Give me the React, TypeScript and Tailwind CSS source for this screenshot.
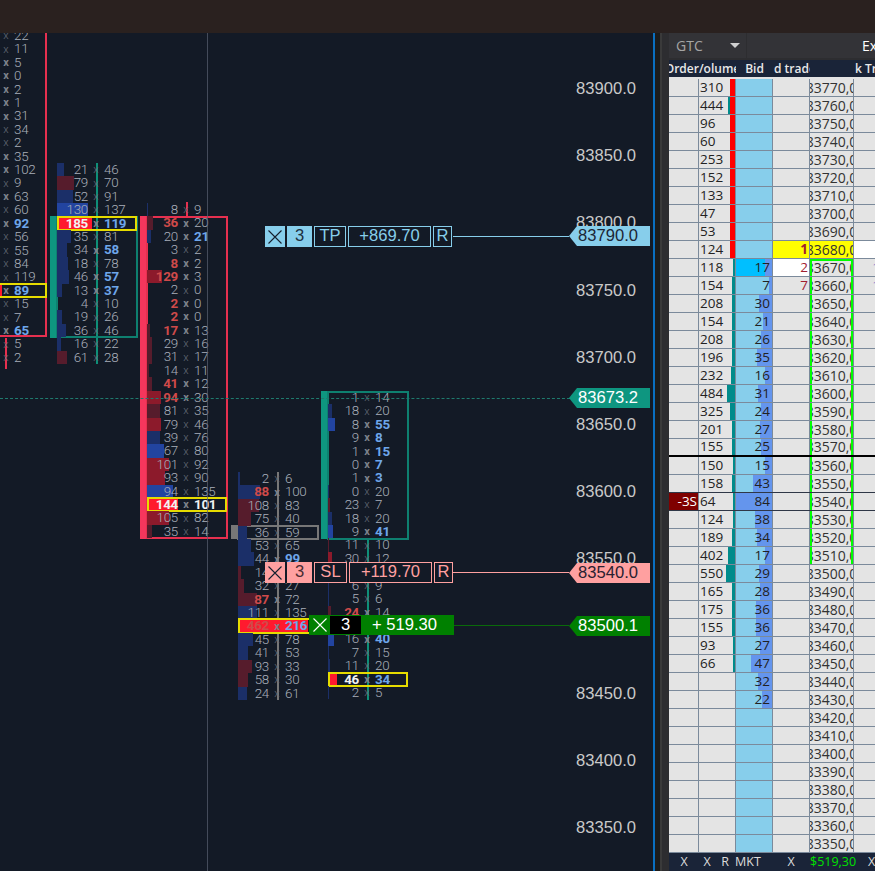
import React from "react";

type Row = [number | string, number | string, number?, string?, string?];

// bar colours for the footprint volume
const barColors: Record<string, string> = {
  n: "bg-[#1b2f68]",
  b: "bg-[#2244a0]",
  d: "bg-[#561c2c]",
  r: "bg-[#8c1a2b]",
  R: "bg-[#ff1a2e]",
};

const col1: Row[] = [
  [0, 22], [0, 11], [0, 5, 0, "", "x"], [0, 0, 0, "", "x"], [0, 2, 0, "", "x"], [0, 1, 0, "", "x"], [0, 31, 0, "", "x"], [0, 34], [0, 2],
  [0, 35, 0, "", "x"], [0, 102, 0, "", "x"], [0, 9], [0, 63, 0, "", "x"], [0, 60], [0, 92, 0, "", "b"], [0, 56], [0, 55], [0, 84], [0, 119],
  [0, 89, 35, "R", "bh"], [0, 15], [0, 7], [0, 65, 0, "", "b"], [0, 5], [0, 2],
];

const col2: Row[] = [
  [21, 46, 7, "n"], [79, 70, 17, "d"], [52, 91, 16, "n"], [130, 137, 31, "b"], [185, 119, 35, "R", "Wbh"], [35, 81, 14, "n"], [34, 58, 10, "n", "b"],
  [18, 78, 11, "n"], [46, 57, 12, "n", "b"], [13, 37, 5, "n", "b"], [4, 10], [19, 26, 5, "n"], [36, 46, 9, "n"], [16, 22, 4, "n"], [61, 28, 10, "d"],
];

const col3: Row[] = [
  [8, 9, 1, "n"], [36, 20, 6, "d", "r"], [20, 21, 4, "n", "b"], [3, 2], [8, 2, 0, "", "r"], [129, 3, 15, "r", "r"], [2, 0], [2, 0, 0, "", "r"], [2, 0, 0, "", "r"],
  [17, 13, 3, "d", "r"], [29, 16, 5, "d"], [31, 17, 5, "d"], [14, 11, 2, "d"], [41, 12, 5, "d", "r"], [94, 30, 14, "r", "r"], [81, 35, 13, "d"], [79, 46, 14, "r"],
  [39, 76, 13, "n"], [67, 80, 17, "b"], [101, 92, 22, "r"], [93, 90, 18, "r"], [94, 135, 26, "b"], [144, 101, 31, "R", "Wah"], [105, 82, 22, "r"], [35, 14, 5, "d"],
];

const col4: Row[] = [
  [2, 6, 2, "n"], [88, 100, 22, "n", "r"], [108, 83, 21, "d"], [75, 40, 13, "d"], [36, 59, 9, "n"], [53, 65, 13, "n"], [44, 99, 16, "n", "b"], [14, 33, 3, "d"],
  [32, 27, 6, "d"], [87, 72, 19, "d", "r"], [111, 135, 19, "n"], [462, 216, 70, "R", "rbh"], [45, 78, 15, "n"], [41, 53, 10, "n"], [93, 33, 14, "d"], [58, 30, 10, "d"], [24, 61, 9, "n"],
];

const col5: Row[] = [
  [1, 14], [18, 20, 4, "n"], [8, 55, 7, "b", "b"], [9, 8, 0, "", "b"], [1, 15, 0, "", "b"], [0, 7, 0, "", "b"], [1, 3, 0, "", "b"], [0, 20, 1, "n"], [23, 7, 2, "d"],
  [18, 20, 4, "n"], [9, 41, 5, "b", "b"], [11, 10, 1, "d"], [30, 12, 4, "r"], [1, 5, 1, "n"], [6, 9, 1, "n"], [5, 6, 1, "n"], [24, 14, 3, "d", "r"], [3, 18, 2, "b"],
  [16, 40, 6, "b", "b"], [7, 15, 1, "n"], [11, 20, 2, "n"], [46, 34, 9, "R", "Wbh"], [2, 5, 1, "n"],
];

function Cluster({ rows, className }: { rows: Row[]; className: string }) {
  return (
    <div className={`absolute w-[80px] ${className}`}>
      {rows.map(([bid, ask, bar = 0, color = "", flags = ""], i) => {
        const boldX = /[rWbx]/.test(flags);
        return (
          <div key={i} className="relative grid h-[13.42px] grid-cols-[31px_16px_1fr] items-center leading-none">
            {bar > 0 && <div className={`absolute inset-y-0 left-0 ${barColors[color]}`} style={{ width: bar }} />}
            {flags.includes("h") && <div className="absolute inset-x-0 -top-px -bottom-px border-2 border-[#e6dc00]" />}
            <span
              className={`relative text-right ${
                flags.includes("r") ? "font-bold text-[#cf4a4a]" : flags.includes("W") ? "font-bold text-[#f2f2f2]" : "text-[#a9afba]"
              }`}
            >
              {bid}
            </span>
            <span className={`relative text-center text-[11px] tracking-normal ${boldX ? "font-bold text-[#7d828b]" : "text-[#666d79]"}`}>x</span>
            <span
              className={`relative ${
                flags.includes("b") ? "font-bold text-[#6ea6ea]" : flags.includes("a") ? "font-bold text-[#f2f2f2]" : "text-[#a9afba]"
              }`}
            >
              {ask}
            </span>
          </div>
        );
      })}
    </div>
  );
}

function XMark() {
  return (
    <svg viewBox="0 0 14 14" className="h-[14px] w-[14px]" fill="none" stroke="currentColor" strokeWidth="1.1">
      <path d="M0.5 0.5 13.5 13.5M13.5 0.5 0.5 13.5" />
    </svg>
  );
}

function PriceTag({ text, className }: { text: string; className: string }) {
  return (
    <div
      className={`absolute left-[569px] flex h-[20px] w-[81px] items-center pl-[9px] font-['Liberation_Sans',sans-serif] text-[16.6px] leading-none [clip-path:polygon(8px_0,100%_0,100%_100%,8px_100%,0_50%)] ${className}`}
    >
      {text}
    </div>
  );
}

const axis: [string, string][] = [
  ["83900.0", "top-[46px]"],
  ["83850.0", "top-[113px]"],
  ["83800.0", "top-[180px]"],
  ["83750.0", "top-[248px]"],
  ["83700.0", "top-[315px]"],
  ["83650.0", "top-[382px]"],
  ["83600.0", "top-[449px]"],
  ["83550.0", "top-[516px]"],
  ["83450.0", "top-[651px]"],
  ["83400.0", "top-[718px]"],
  ["83350.0", "top-[785px]"],
];

function Chart() {
  return (
    <div className="relative h-full w-[653px] overflow-hidden bg-[#131a26] font-['Roboto',sans-serif] text-[13.4px] font-light tracking-[-0.3px]">
      {/* candle wicks */}
      <div className="absolute left-[5px] top-[305px] h-[31px] w-[2px] bg-[#e6304f]" />
      <div className="absolute left-[96px] top-[130px] h-[201px] w-[2px] bg-[#0e8f78]" />
      <div className="absolute left-[186px] top-[169px] h-[15px] w-[2px] bg-[#e6304f]" />
      <div className="absolute left-[277px] top-[439px] h-[228px] w-[2px] bg-[#777777]" />
      <div className="absolute left-[367px] top-[506px] h-[161px] w-[2px] bg-[#0e8f78]" />

      {/* candle bodies */}
      <div className="absolute -left-[3px] -top-[3px] h-[307px] w-[50px] border-2 border-[#e6304f]" />
      <div className="absolute left-[50px] top-[183px] h-[122px] w-[7px] bg-[#0e9680]" />
      <div className="absolute left-[56px] top-[183px] h-[122px] w-[82px] border-2 border-[#0e8070]" />
      <div className="absolute left-[140px] top-[183px] h-[323px] w-[7px] bg-[#f5365c]" />
      <div className="absolute left-[146px] top-[183px] h-[323px] w-[82px] border-2 border-[#e6304f]" />
      <div className="absolute left-[231px] top-[492px] h-[14px] w-[7px] bg-[#777777]" />
      <div className="absolute left-[237px] top-[492px] h-[15px] w-[82px] border-2 border-[#777777]" />
      <div className="absolute left-[321px] top-[358px] h-[148px] w-[7px] bg-[#0e9680]" />
      <div className="absolute left-[327px] top-[358px] h-[149px] w-[82px] border-2 border-[#0e8070]" />

      <Cluster rows={col1} className="-left-[33px] top-[-4px]" />
      <Cluster rows={col2} className="left-[57px] top-[130px]" />
      <Cluster rows={col3} className="left-[147px] top-[170px]" />
      <Cluster rows={col4} className="left-[238px] top-[439px]" />
      <Cluster rows={col5} className="left-[328px] top-[358px]" />

      {/* grid lines */}
      <div className="absolute inset-y-0 left-[207px] w-px bg-[#5a6170]/70" />
      <div className="absolute left-0 top-[365px] w-[570px] border-t border-dashed border-[#1f7a6e]" />

      {/* price axis */}
      {axis.map(([p, top]) => (
        <div key={p} className={`absolute left-[576px] font-['Liberation_Sans',sans-serif] text-[16.6px] font-normal leading-[20px] tracking-normal text-[#c9c9c9] ${top}`}>
          {p}
        </div>
      ))}

      {/* lines from the orders to the axis */}
      <div className="absolute left-[453px] top-[203px] h-px w-[116px] bg-[#87ceeb]" />
      <div className="absolute left-[453px] top-[539px] h-px w-[116px] bg-[#ffa0a0]" />
      <div className="absolute left-[454px] top-[592px] h-px w-[115px] bg-[#0a6a0a]" />

      <PriceTag text="83790.0" className="top-[193px] bg-[#87ceeb] font-normal tracking-normal text-[#1c2636]" />
      <PriceTag text="83673.2" className="top-[355px] bg-[#0e9680] font-normal tracking-normal text-white" />
      <PriceTag text="83540.0" className="top-[530px] bg-[#ffa0a0] font-normal tracking-normal text-[#2a2030]" />
      <PriceTag text="83500.1" className="top-[583px] bg-[#008000] font-normal tracking-normal text-white" />

      {/* take profit */}
      <div className="absolute left-[265px] top-[193px] flex h-[21px] font-['Liberation_Sans',sans-serif] text-[16.6px] font-normal leading-none tracking-normal text-[#87ceeb]">
        <div className="flex w-[20px] items-center justify-center bg-[#87ceeb] text-[#16202e]">
          <XMark />
        </div>
        <div className="ml-[2px] flex w-[25px] items-center justify-center bg-[#87ceeb] text-[#1c3040]">3</div>
        <div className="ml-[2px] flex w-[32px] items-center justify-center border border-[#87ceeb]">TP</div>
        <div className="ml-[2px] flex w-[83px] items-center justify-center border border-[#87ceeb]">+869.70</div>
        <div className="ml-[2px] flex w-[19px] items-center justify-center border border-[#87ceeb]">R</div>
      </div>

      {/* stop loss */}
      <div className="absolute left-[265px] top-[529px] flex h-[21px] bg-[#131a26] font-['Liberation_Sans',sans-serif] text-[16.6px] font-normal leading-none tracking-normal text-[#ffa0a0]">
        <div className="flex w-[20px] items-center justify-center bg-[#ffa0a0] text-[#16202e]">
          <XMark />
        </div>
        <div className="ml-[2px] flex w-[25px] items-center justify-center bg-[#ffa0a0] text-[#4a2a30]">3</div>
        <div className="ml-[2px] flex w-[33px] items-center justify-center border border-[#ffa0a0]">SL</div>
        <div className="ml-[2px] flex w-[83px] items-center justify-center border border-[#ffa0a0]">+119.70</div>
        <div className="ml-[2px] flex w-[19px] items-center justify-center border border-[#ffa0a0]">R</div>
      </div>

      {/* open position */}
      <div className="absolute left-[309px] top-[582px] flex h-[20px] w-[145px] bg-[#008000] font-['Liberation_Sans',sans-serif] text-[16.6px] font-normal leading-none tracking-normal text-white">
        <div className="flex w-[21px] items-center justify-center">
          <XMark />
        </div>
        <div className="my-px flex w-[31px] items-center justify-center bg-black">3</div>
        <div className="flex flex-1 items-center pl-[11px]">+ 519.30</div>
      </div>
    </div>
  );
}

const volumes = [
  310, 444, 96, 60, 253, 152, 133, 47, 53, 124, 118, 154, 208, 154, 208, 196, 232, 484, 325, 201, 155, 150, 158, 64, 124, 189, 402, 550, 165, 175, 155, 93, 66,
];
const bids = [17, 7, 30, 21, 26, 35, 16, 31, 24, 27, 25, 15, 43, 84, 38, 34, 17, 29, 28, 36, 36, 27, 47, 32, 22];
const prices = Array.from({ length: 43 }, (_, i) => 83770 - i * 10);

function LadderRow({ price, i }: { price: number; i: number }) {
  const vol = volumes[i];
  const bid = bids[i - 10];
  const inRange = price <= 83670 && price >= 83510;
  const border = i === 20 ? "border-b-2 border-black" : i === 22 || i === 23 ? "border-b border-[#2f3747]" : "border-b border-[#7b8a9b]";
  const height = i === 0 ? "h-[20px] pt-[2px]" : "h-[18px]";
  const cell = "relative flex items-center overflow-hidden border-r border-[#7b8a9b]";

  return (
    <div className={`grid grid-cols-[30px_37px_37px_37px_44px_21px] bg-[#e4e4e4] ${height} ${border}`}>
      <div className={`${cell} justify-end ${price === 83540 ? "bg-[#7f0000] pr-px text-white" : ""}`}>{price === 83540 ? "-3S" : ""}</div>
      <div className={cell}>
        {vol !== undefined && (
          <>
            <div className="absolute inset-y-0 right-0 bg-[#008b8b]" style={{ width: Math.max(2, vol / 60) }} />
            {i < 10 && <div className="absolute inset-y-0 right-0 w-[5px] bg-[#ff0000]" />}
            <span className="relative pl-px">{vol}</span>
          </>
        )}
      </div>
      <div className={`${cell} justify-end bg-[#87ceeb]`}>
        {price === 83670 && <div className="absolute inset-y-0 left-0 w-[30px] bg-[#00bfff]" />}
        {bid !== undefined && (
          <>
            <div className="absolute inset-y-0 right-0 bg-[#6495ed]" style={{ width: bid * 0.44 }} />
            <span className="relative pr-[2px]">{bid}</span>
          </>
        )}
      </div>
      <div
        className={`${cell} justify-end pr-px text-[#a02030] ${price === 83680 ? "bg-[#ffff00] font-bold text-[#8b0000]" : price === 83670 ? "bg-white" : ""}`}
      >
        {price === 83680 ? 1 : price === 83670 ? 2 : price === 83660 ? 7 : ""}
      </div>
      <div className={`${cell} justify-center text-[14px] text-[#333333] ${price === 83680 ? "bg-[#ffff00]" : ""}`}>
        {inRange && <div className="absolute inset-y-0 left-0 w-[2px] bg-[#00ff00]" />}
        {inRange && <div className="absolute inset-y-0 right-0 w-[2px] bg-[#00ff00]" />}
        {price === 83670 && <div className="absolute inset-x-0 top-0 h-[2px] bg-[#00ff00]" />}
        <span className="whitespace-nowrap">{price},0</span>
      </div>
      <div className={`flex items-center justify-end overflow-hidden text-[#8a80cc] ${price === 83680 ? "bg-white" : ""}`}>
        {price === 83670 || price === 83660 ? <span className="-mr-[5px]">1</span> : null}
      </div>
    </div>
  );
}

function Ladder() {
  return (
    <div className="flex h-full w-[206px] flex-col overflow-hidden bg-[#2d2d30] font-['Open_Sans',sans-serif] text-[13.5px] leading-none text-[#222222]">
      <div className="flex h-[27px] gap-px pb-[2px] text-[14px] text-[#c8c8c8]">
        <div className="flex w-[77px] items-center justify-between bg-[#333337] pl-[7px] pr-[6px] text-[#a5a5a5]">
          GTC
          <svg viewBox="0 0 10 5" className="h-[5px] w-[10px]" fill="#d0d0d0">
            <path d="M0 0h10L5 5z" />
          </svg>
        </div>
        <div className="flex flex-1 items-center overflow-hidden bg-[#333337] pl-[115px] text-white">Execution</div>
      </div>
      <div className="grid h-[17px] grid-cols-[67px_37px_37px_44px_21px] items-center bg-[#1a2438] text-[12px] font-semibold text-[#e8e8e8]">
        <div className="flex justify-center overflow-hidden whitespace-nowrap">Order/olume</div>
        <div className="text-center">Bid</div>
        <div className="overflow-hidden whitespace-nowrap pl-px">d trade</div>
        <div />
        <div className="overflow-hidden whitespace-nowrap pl-px">k Trades</div>
      </div>
      {prices.map((p, i) => (
        <LadderRow key={p} price={p} i={i} />
      ))}
      <div className="flex flex-1 items-center whitespace-nowrap bg-[#1a2438] text-[12.5px] font-medium text-[#dcdcdc]">
        <span className="w-[30px] text-center">X</span>
        <span className="w-[16px] text-center">X</span>
        <span className="w-[20px] text-center">R</span>
        <span className="w-[26px] text-center">MKT</span>
        <span className="ml-[11px] w-[38px] text-center">X</span>
        <span className="w-[44px] text-center text-[#00e000]">$519,30</span>
        <span className="ml-[14px] w-[7px] text-center">X</span>
      </div>
    </div>
  );
}

export default function App() {
  return (
    <div className="flex h-[871px] w-[875px] flex-col overflow-hidden bg-[#131a26]">
      <div className="h-[33px] shrink-0 bg-[#2a211f]" />
      <div className="flex min-h-0 flex-1">
        <Chart />
        <div className="w-[2px] bg-[#0a6fc0]" />
        <div className="w-[5px] bg-[#1c1c1c]" />
        <div className="w-[2px] bg-[#3a3a3a]" />
        <div className="w-[7px] bg-[#2d2d30]" />
        <Ladder />
      </div>
    </div>
  );
}
